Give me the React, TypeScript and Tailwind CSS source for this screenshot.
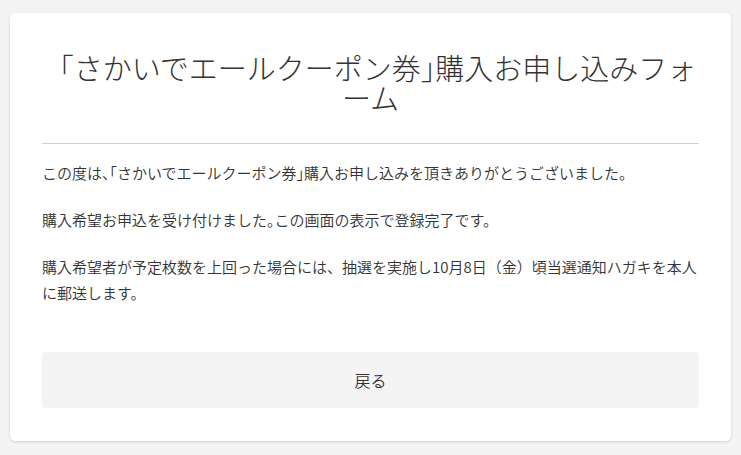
function H({ children }: { children: string }) {
  return <span className="[font-feature-settings:'halt']">{children}</span>;
}

export default function App() {
  return (
    <div
      className="min-h-[455px] bg-[#f4f4f4] px-[10px] pt-[13px] pb-[14px]"
      style={{ fontFamily: '"Noto Sans CJK JP", "Noto Sans", sans-serif' }}
    >
      <div className="rounded-[5px] bg-white px-[32px] pt-[39px] pb-[33px] shadow-[0_1px_3px_rgba(0,0,0,0.15)]">
        <h1 className="text-center text-[29px] font-light leading-[30px] text-[#333]">
          「さかいでエールクーポン券<H>」</H>購入お申し込みフォーム
        </h1>
        <div className="mt-[31px] h-px bg-[#d0d0d0]" />
        <div className="mt-[16px] text-[15px] font-[350] leading-[26px] text-[#333]">
          <p className="mb-[21px]">
            この度は<H>、</H>「さかいでエールクーポン券<H>」</H>購入お申し込みを頂きありがとうございました。
          </p>
          <p className="mb-[21px]">
            購入希望お申込を受け付けました<H>。</H>この画面の表示で登録完了です。
          </p>
          <p>
            購入希望者が予定枚数を上回った場合には、抽選を実施し10月8日（金）頃当選通知ハガキを本人に郵送します。
          </p>
        </div>
        <button className="mt-[46px] flex h-[56px] w-full items-center justify-center rounded-[4px] bg-[#f4f4f4] text-[16px] font-[350] text-[#333]">
          戻る
        </button>
      </div>
    </div>
  );
}
